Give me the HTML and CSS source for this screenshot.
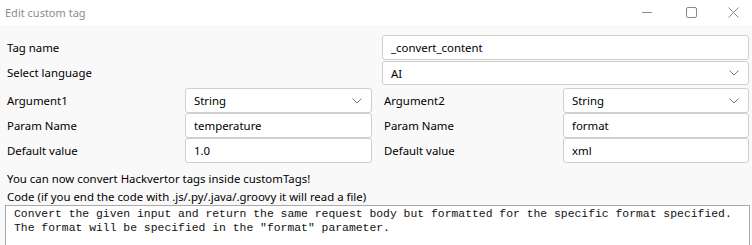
FILE: index.html
```html
<!DOCTYPE html>
<html>
<head>
<meta charset="utf-8">
<link rel="stylesheet" href="styles.css">
</head>
<body>
<div class="window">
  <div class="titlebar">
    <span class="title">Edit custom tag</span>
    <div class="controls">
      <svg class="ctl" width="46" height="25" viewBox="0 0 46 25"><line x1="18" y1="12.5" x2="28" y2="12.5" stroke="#8a8a8a" stroke-width="1"/></svg>
      <svg class="ctl" width="42" height="25" viewBox="0 0 42 25"><rect x="16.5" y="7.5" width="10" height="10" rx="1.5" fill="none" stroke="#8a8a8a" stroke-width="1"/></svg>
      <svg class="ctl" width="40" height="25" viewBox="0 0 40 25"><path d="M16.5 7.5 L26.5 17.5 M26.5 7.5 L16.5 17.5" stroke="#8a8a8a" stroke-width="1"/></svg>
    </div>
  </div>
  <div class="content">
    <div class="grid-top">
      <div class="label">Tag name</div>
      <div class="field">_convert_content</div>
      <div class="label">Select language</div>
      <div class="field select">AI<svg class="chev" width="10" height="6" viewBox="0 0 10 6"><path d="M0.5 0.5 L5 5 L9.5 0.5" fill="none" stroke="#777" stroke-width="1"/></svg></div>
    </div>
    <div class="grid-args">
      <div class="label">Argument1</div>
      <div class="field select">String<svg class="chev" width="10" height="6" viewBox="0 0 10 6"><path d="M0.5 0.5 L5 5 L9.5 0.5" fill="none" stroke="#777" stroke-width="1"/></svg></div>
      <div class="label label2">Argument2</div>
      <div class="field select">String<svg class="chev" width="10" height="6" viewBox="0 0 10 6"><path d="M0.5 0.5 L5 5 L9.5 0.5" fill="none" stroke="#777" stroke-width="1"/></svg></div>
      <div class="label">Param Name</div>
      <div class="field">temperature</div>
      <div class="label label2">Param Name</div>
      <div class="field">format</div>
      <div class="label">Default value</div>
      <div class="field">1.0</div>
      <div class="label label2">Default value</div>
      <div class="field">xml</div>
    </div>
    <div class="note">You can now convert Hackvertor tags inside customTags!</div>
    <div class="note code-label">Code (if you end the code with .js/.py/.java/.groovy it will read a file)</div>
    <div class="code">Convert the given input and return the same request body but formatted for the specific format specified.
The format will be specified in the "format" parameter.</div>
  </div>
</div>
</body>
</html>
```

FILE: styles.css
```css
* { box-sizing: border-box; }
html, body {
  margin: 0;
  padding: 0;
  background: #f9f9f9;
  font-family: "Noto Sans", "Open Sans", sans-serif;
  font-size: 11.4px;
  color: #000000;
}
.window {
  width: 752px;
  height: 245px;
  overflow: hidden;
}
.titlebar {
  height: 25px;
  background: #ffffff;
  display: flex;
  align-items: center;
  justify-content: space-between;
  padding-left: 5px;
}
.title {
  color: #8c8c8c;
  font-size: 11px;
}
.controls {
  display: flex;
  align-items: center;
}
.ctl { display: block; }
.content {
  padding: 10px 3px 0 5px;
}
.grid-top {
  display: grid;
  grid-template-columns: 377px 367px;
  grid-template-rows: 25px 25px;
}
.grid-args {
  margin-top: 3px;
  display: grid;
  grid-template-columns: 180px 187px 191px 186px;
  grid-template-rows: 25px 25px 25px;
}
.label {
  display: flex;
  align-items: center;
  padding-left: 2px;
}
.label2 { padding-left: 12px; }
.field {
  background: #ffffff;
  border: 1px solid #cfcfcf;
  border-radius: 3px;
  display: flex;
  align-items: center;
  padding-left: 8px;
}
.grid-top .field + .label + .field { margin-top: 1px; }
.select { justify-content: space-between; padding-right: 9px; }
.chev { display: block; }
.note {
  height: 19px;
  display: flex;
  align-items: center;
  padding-left: 2px;
  margin-top: 6px;
}
.code-label { margin-top: 0; height: 17px; }
.code {
  width: 745px;
  height: 60px;
  background: #ffffff;
  border: 1px solid #a9a9a9;
  font-family: "Liberation Mono", "Courier New", monospace;
  font-size: 11.4px;
  line-height: 14px;
  white-space: pre;
  padding: 1px 0 0 8px;
  color: #111;
}
```
